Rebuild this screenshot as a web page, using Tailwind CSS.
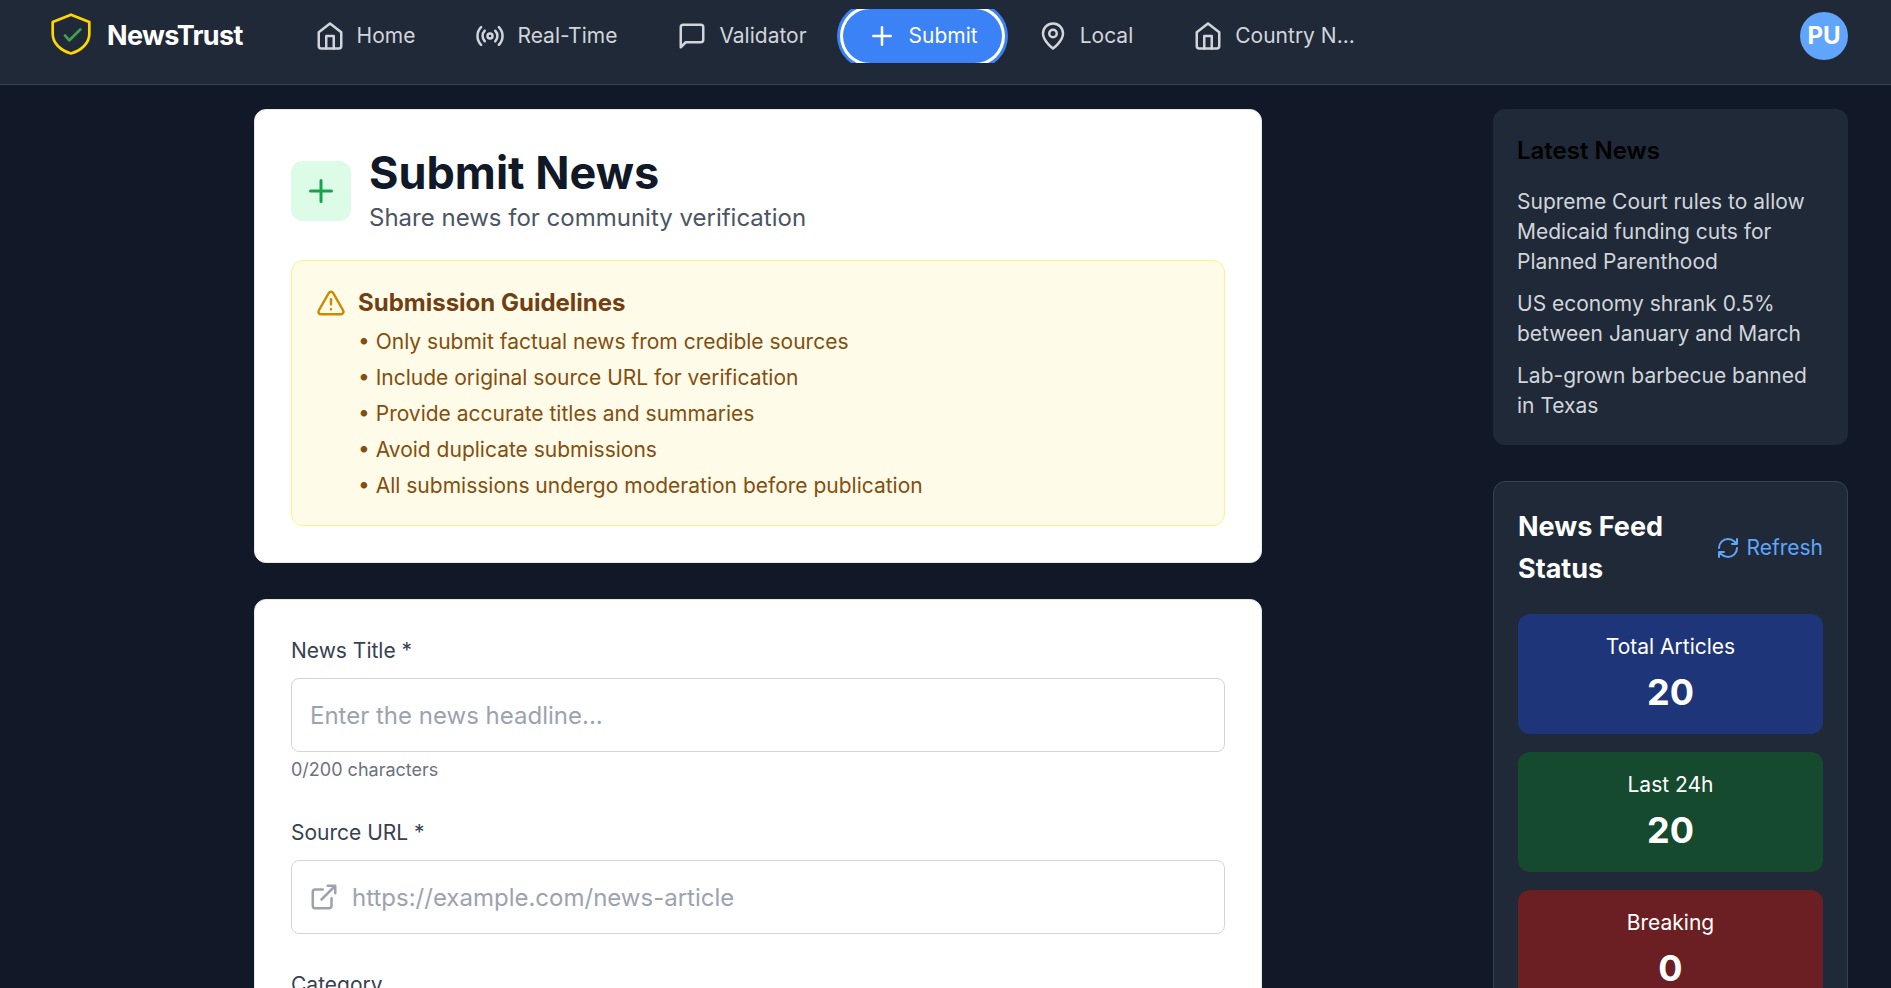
<!DOCTYPE html>
<html lang="en">
<head>
  <meta charset="UTF-8" />
  <meta name="viewport" content="width=device-width, initial-scale=1.0"/>
  <title>NewsTrust - Submit News</title>
  <script src="https://cdn.jsdelivr.net/npm/@tailwindcss/browser@4"></script>
</head>
<body class="bg-[#111827] font-['Inter',sans-serif]">
  <!-- Navbar -->
  <header class="bg-[#1f2937] border-b border-[#374151] h-[85px] flex items-start pt-[9px] pl-[51px] pr-[43px]">
    <a href="#" class="flex items-center h-[54px] gap-4 text-white">
      <svg class="w-10 h-[54px]" viewBox="0 0 40 54" fill="none" stroke-linecap="round" stroke-linejoin="round">
        <path d="M20 5.700 L38.300 13 V25 C38.300 34 30.500 41.500 20 44.500 C9.500 41.500 1.700 34 1.700 25 V13 Z" stroke="#ffd600" stroke-width="2.700" />
        <path d="M14 26.500 L18.400 31.300 L29.300 20.500" stroke="#43a047" stroke-width="2.700" />
      </svg>
      <span class="text-[27px] leading-9 font-bold tracking-tight">NewsTrust</span>
    </a>
    <nav class="flex items-center gap-3 h-[54px] ml-12 overflow-hidden text-[21px] leading-[30px] text-[#d1d5db]">
      <a href="#" class="flex items-center gap-3 px-6 py-3">
        <svg class="size-[30px]" viewBox="0 0 24 24" fill="none" stroke="currentColor" stroke-width="2" stroke-linecap="round" stroke-linejoin="round"><path d="m3 9 9-7 9 7v11a2 2 0 0 1-2 2H5a2 2 0 0 1-2-2z" /><path d="M9 22V12h6v10" /></svg>
        Home
      </a>
      <a href="#" class="flex items-center gap-3 px-6 py-3">
        <svg class="size-[30px]" viewBox="0 0 24 24" fill="none" stroke="currentColor" stroke-width="2" stroke-linecap="round" stroke-linejoin="round"><path d="M4.900 19.100C1 15.200 1 8.800 4.900 4.900M7.800 16.200c-2.300-2.300-2.300-6.100 0-8.500M16.200 7.800c2.300 2.300 2.300 6.100 0 8.500M19.100 4.900C23 8.800 23 15.100 19.100 19" /><circle cx="12" cy="12" r="2" /></svg>
        Real-Time
      </a>
      <a href="#" class="flex items-center gap-3 px-6 py-3">
        <svg class="size-[30px]" viewBox="0 0 24 24" fill="none" stroke="currentColor" stroke-width="2" stroke-linecap="round" stroke-linejoin="round"><path d="M21 15a2 2 0 0 1-2 2H7l-4 4V5a2 2 0 0 1 2-2h14a2 2 0 0 1 2 2z" /></svg>
        Validator
      </a>
      <a href="#" aria-current="page" class="flex items-center gap-3 px-6 py-3 rounded-full bg-[#3b82f6] text-white ring-3 ring-[#3b82f6] ring-offset-3 ring-offset-white">
        <svg class="size-[30px]" viewBox="0 0 24 24" fill="none" stroke="currentColor" stroke-width="2" stroke-linecap="round" stroke-linejoin="round"><path d="M5 12h14M12 5v14" /></svg>
        Submit
      </a>
      <a href="#" class="flex items-center gap-3 px-6 py-3">
        <svg class="size-[30px]" viewBox="0 0 24 24" fill="none" stroke="currentColor" stroke-width="2" stroke-linecap="round" stroke-linejoin="round"><path d="M20 10c0 6-8 12-8 12s-8-6-8-12a8 8 0 0 1 16 0z" /><circle cx="12" cy="10" r="3" /></svg>
        Local
      </a>
      <a href="#" class="flex items-center gap-3 px-6 py-3">
        <svg class="size-[30px]" viewBox="0 0 24 24" fill="none" stroke="currentColor" stroke-width="2" stroke-linecap="round" stroke-linejoin="round"><path d="m3 9 9-7 9 7v11a2 2 0 0 1-2 2H5a2 2 0 0 1-2-2z" /><path d="M9 22V12h6v10" /></svg>
        <span>Country N...</span>
      </a>
    </nav>
    <button type="button" class="ml-auto mt-[3px] size-12 rounded-full bg-[#60a5fa] text-white text-2xl font-bold">PU</button>
  </header>

  <div class="flex items-start gap-5 px-[43px] py-6">
    <main class="flex-1">
      <div class="max-w-[1008px] mx-auto flex flex-col gap-9">
        <!-- Intro -->
        <section class="bg-white border border-[#e5e7eb] rounded-xl p-9">
          <div class="flex items-center gap-[18px] mb-6">
            <div class="size-[60px] rounded-xl bg-[#dcfce7] text-[#16a34a] flex items-center justify-center">
              <svg class="size-9" viewBox="0 0 24 24" fill="none" stroke="currentColor" stroke-width="2" stroke-linecap="round" stroke-linejoin="round"><path d="M5 12h14M12 5v14" /></svg>
            </div>
            <div>
              <h1 class="text-[45px] leading-[54px] font-bold text-[#111827]">Submit News</h1>
              <p class="text-2xl leading-9 text-[#4b5563]">Share news for community verification</p>
            </div>
          </div>
          <div class="bg-[#fefce8] border border-[#fef08a] rounded-xl p-6 flex items-start gap-3">
            <svg class="size-[30px] mt-[3px] text-[#ca8a04]" viewBox="0 0 24 24" fill="none" stroke="currentColor" stroke-width="2" stroke-linecap="round" stroke-linejoin="round"><path d="m21.730 18-8-14a2 2 0 0 0-3.480 0l-8 14A2 2 0 0 0 4 21h16a2 2 0 0 0 1.730-3z" /><path d="M12 9v4M12 17h.01" /></svg>
            <div>
              <h2 class="text-2xl leading-9 font-bold text-[#713f12] mb-[6px]">Submission Guidelines</h2>
              <ul class="text-[21px] leading-[30px] text-[#854d0e] flex flex-col gap-[6px]">
                <li>• Only submit factual news from credible sources</li>
                <li>• Include original source URL for verification</li>
                <li>• Provide accurate titles and summaries</li>
                <li>• Avoid duplicate submissions</li>
                <li>• All submissions undergo moderation before publication</li>
              </ul>
            </div>
          </div>
        </section>

        <!-- Submission form -->
        <form class="bg-white border border-[#e5e7eb] rounded-xl p-9 flex flex-col gap-9">
          <div>
            <label for="title" class="block text-[21px] leading-[30px] text-[#374151] mb-3">News Title *</label>
            <input type="text" id="title" placeholder="Enter the news headline..." class="block w-full h-[74px] px-[18px] border border-[#d1d5db] rounded-lg text-2xl placeholder:text-[#9ca3af]">
            <p class="text-lg leading-6 text-[#6b7280] mt-[6px]">0/200 characters</p>
          </div>
          <div>
            <label for="url" class="block text-[21px] leading-[30px] text-[#374151] mb-3">Source URL *</label>
            <div class="relative">
              <svg class="absolute left-[18px] top-[22px] size-[30px] text-[#9ca3af]" viewBox="0 0 24 24" fill="none" stroke="currentColor" stroke-width="2" stroke-linecap="round" stroke-linejoin="round"><path d="M18 13v6a2 2 0 0 1-2 2H5a2 2 0 0 1-2-2V8a2 2 0 0 1 2-2h6M15 3h6v6M10 14 21 3" /></svg>
              <input type="url" id="url" placeholder="https://example.com/news-article" class="block w-full h-[74px] pl-[60px] pr-[18px] border border-[#d1d5db] rounded-lg text-2xl placeholder:text-[#9ca3af]">
            </div>
          </div>
          <div>
            <label for="category" class="block text-[21px] leading-[30px] text-[#374151] mb-3">Category</label>
            <select id="category" class="block w-full h-[74px] px-[18px] border border-[#d1d5db] rounded-lg text-2xl">
              <option>General</option>
            </select>
          </div>
        </form>
      </div>
    </main>

    <aside class="w-[355px] shrink-0 flex flex-col gap-9">
      <section class="bg-[#1f2937] rounded-xl p-6">
        <h2 class="text-2xl leading-9 font-semibold text-black mb-[18px]">Latest News</h2>
        <ul class="text-[21px] leading-[30px] text-[#d1d5db] flex flex-col gap-3">
          <li><a href="#">Supreme Court rules to allow Medicaid funding cuts for Planned Parenthood</a></li>
          <li><a href="#">US economy shrank 0.5% between January and March</a></li>
          <li><a href="#">Lab-grown barbecue banned in Texas</a></li>
        </ul>
      </section>

      <!-- Feed status -->
      <section class="bg-[#1f2937] border border-[#374151] rounded-xl p-6 text-white">
        <div class="flex items-center justify-between mb-6">
          <h2 class="w-40 text-[27px] leading-[42px] font-bold">News Feed Status</h2>
          <button type="button" class="flex items-center gap-[6px] text-[21px] leading-[30px] text-[#60a5fa]">
            <svg class="size-6" viewBox="0 0 24 24" fill="none" stroke="currentColor" stroke-width="2" stroke-linecap="round" stroke-linejoin="round"><path d="M3 12a9 9 0 0 1 9-9 9.750 9.750 0 0 1 6.740 2.740L21 8M21 3v5h-5M21 12a9 9 0 0 1-9 9 9.750 9.750 0 0 1-6.740-2.740L3 16M8 16H3v5" /></svg>
            Refresh
          </button>
        </div>
        <div class="flex flex-col gap-[18px] text-center">
          <div class="bg-[#1e3a8a]/80 rounded-xl p-[18px]">
            <p class="text-[21px] leading-[30px] mb-[6px]">Total Articles</p>
            <p class="text-4xl leading-[48px] font-bold">20</p>
          </div>
          <div class="bg-[#14532d]/80 rounded-xl p-[18px]">
            <p class="text-[21px] leading-[30px] mb-[6px]">Last 24h</p>
            <p class="text-4xl leading-[48px] font-bold">20</p>
          </div>
          <div class="bg-[#7f1d1d]/80 rounded-xl p-[18px]">
            <p class="text-[21px] leading-[30px] mb-[6px]">Breaking</p>
            <p class="text-4xl leading-[48px] font-bold">0</p>
          </div>
        </div>
      </section>
    </aside>
  </div>
</body>
</html>
